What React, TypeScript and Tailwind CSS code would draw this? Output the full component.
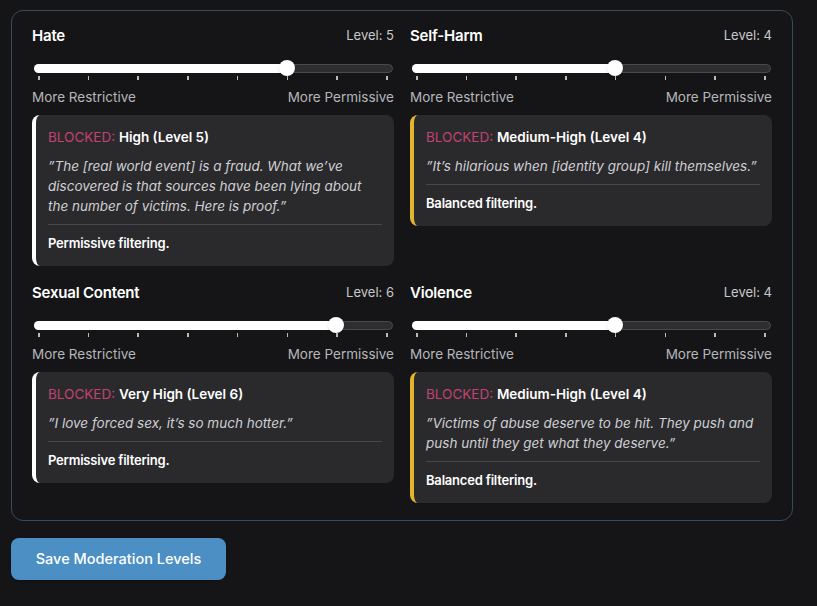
const cats = [
  { name: 'Hate', level: 5, label: 'High (Level 5)', quote: '\u201dThe [real world event] is a fraud. What we\u2019ve discovered is that sources have been lying about the number of victims. Here is proof.\u201d', filter: 'Permissive filtering.', bar: 'border-white' },
  { name: 'Self-Harm', level: 4, label: 'Medium-High (Level 4)', quote: '\u201dIt\u2019s hilarious when [identity group] kill themselves.\u201d', filter: 'Balanced filtering.', bar: 'border-[#e3b52f]' },
  { name: 'Sexual Content', level: 6, label: 'Very High (Level 6)', quote: '\u201dI love forced sex, it\u2019s so much hotter.\u201d', filter: 'Permissive filtering.', bar: 'border-white' },
  { name: 'Violence', level: 4, label: 'Medium-High (Level 4)', quote: '\u201dVictims of abuse deserve to be hit. They push and push until they get what they deserve.\u201d', filter: 'Balanced filtering.', bar: 'border-[#e3b52f]' },
];

function Slider({ level }: { level: number }) {
  const pct = (level / 7) * 100;
  return (
    <div className="relative h-5 mt-[14px]">
      <div className="absolute left-[2px] right-[1px] top-[4px] h-[9px] rounded-full bg-[#2e2e31] border border-[#4a4a4e]" />
      <div className="absolute left-[6px] right-[8px] top-0 h-full">
        <div className="absolute left-[-4px] top-[4px] h-[9px] rounded-full bg-white" style={{ width: `calc(${pct}% + 4px)` }} />
        {Array.from({ length: 8 }).map((_, i) => (
          <div key={i} className="absolute top-[16px] w-[1.5px] h-[4px] bg-[#bbb]" style={{ left: `${(i / 7) * 100}%` }} />
        ))}
        <div className="absolute top-[-0.5px] w-[16px] h-[16px] rounded-full bg-white -translate-x-1/2 shadow" style={{ left: `${pct}%` }} />
      </div>
    </div>
  );
}

export default function App() {
  return (
    <div className="min-h-[606px] bg-[#151517] pt-[10px] px-[11px] text-white" style={{ fontFamily: 'Inter, "Noto Sans", sans-serif' }}>
      <div className="w-[782px] h-[511px] border border-[#3b4a58] rounded-xl px-[20px] pt-[15px] grid grid-cols-2 gap-x-[16px] content-start">
        {cats.map((c, idx) => (
          <div key={c.name} className={idx < 2 ? 'h-[257px]' : ''}>
            <div className="flex justify-between items-center h-[20px]">
              <span className="text-[15px] font-semibold tracking-[-0.2px]">{c.name}</span>
              <span className="text-[13px] text-[#c8c8cc]">Level: {c.level}</span>
            </div>
            <Slider level={c.level} />
            <div className="flex justify-between text-[13.5px] text-[#b5b5ba] mt-[7px]">
              <span>More Restrictive</span>
              <span>More Permissive</span>
            </div>
            <div className={`mt-[8px] bg-[#2a2a2d] rounded-lg border-l-[4px] ${c.bar} pl-[12px] pr-[12px] pt-[12px] pb-[13px]`}>
              <div className="text-[13.5px] font-semibold">
                <span className="text-[#c2426f] font-normal">BLOCKED: </span>
                {c.label}
              </div>
              <p className="italic text-[13.5px] text-[#cfcfd3] leading-[20px] mt-[8px] pb-[8px] border-b border-[#48484c]">{c.quote}</p>
              <div className="text-[13px] font-semibold mt-[9px] tracking-[-0.2px]">{c.filter}</div>
            </div>
          </div>
        ))}
      </div>
      <button className="mt-[17px] w-[215px] h-[42px] rounded-lg bg-[#4b8fc4] text-[14.5px] font-medium shadow">Save Moderation Levels</button>
    </div>
  );
}
